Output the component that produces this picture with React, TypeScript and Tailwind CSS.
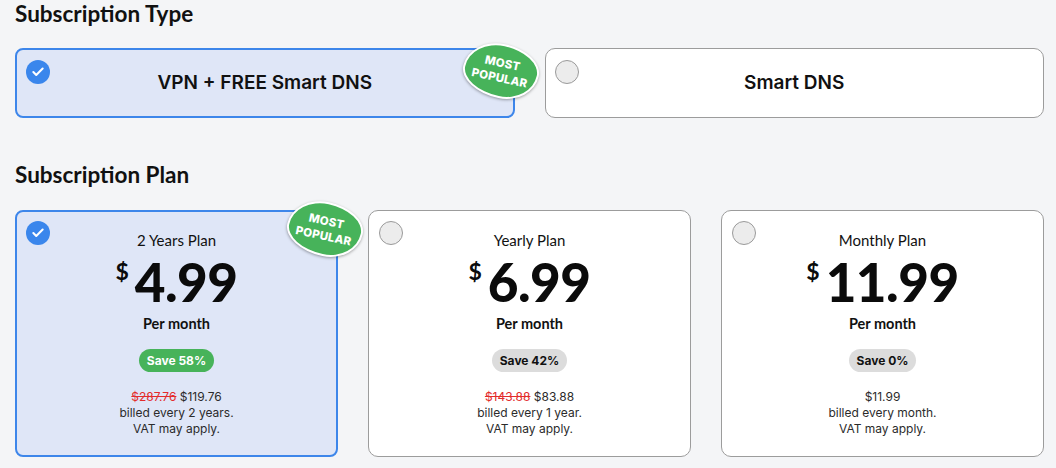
import { Check } from "lucide-react";

const SANS = "font-['Inter','Noto_Sans',sans-serif]";
const LATO = "font-['Lato','Noto_Sans',sans-serif]";

/* ---------- data ---------- */
const PLANS = [
  {
    name: "2 Years Plan",
    price: "4.99",
    save: "Save 58%",
    old: "$287.76",
    now: "$119.76",
    billed: "billed every 2 years.",
    selected: true,
  },
  {
    name: "Yearly Plan",
    price: "6.99",
    save: "Save 42%",
    old: "$143.88",
    now: "$83.88",
    billed: "billed every 1 year.",
    selected: false,
  },
  {
    name: "Monthly Plan",
    price: "11.99",
    save: "Save 0%",
    old: "",
    now: "$11.99",
    billed: "billed every month.",
    selected: false,
  },
];

/* ---------- bits ---------- */
function Radio({ on }: { on: boolean }) {
  return on ? (
    <span className="flex h-6 w-6 items-center justify-center rounded-full bg-[#3a86ec]">
      <Check size={14} strokeWidth={3.5} className="text-white" />
    </span>
  ) : (
    <span className="block h-6 w-6 rounded-full border border-[#9a9a9a] bg-[#ececec]" />
  );
}

function PopularBadge({ className }: { className: string }) {
  return (
    <div
      className={`absolute flex h-[54px] w-[76px] rotate-[12deg] items-center justify-center rounded-[48%_52%_46%_54%/55%_45%_55%_45%] border-2 border-white bg-[#47b35a] shadow-[0_1px_3px_rgba(0,0,0,0.35)] ${className}`}
    >
      <p
        className={`text-center text-[11.5px] font-extrabold uppercase leading-[15px] tracking-[0.2px] text-white ${SANS}`}
      >
        Most
        <br />
        Popular
      </p>
    </div>
  );
}

function TypeCard({ label, on }: { label: string; on: boolean }) {
  return (
    <div
      className={`relative flex h-[70px] items-center justify-center ${
        on
          ? "rounded-lg border-2 border-[#3d86ea] bg-[#dfe6f7]"
          : "rounded-[10px] border border-[#9c9c9c] bg-white"
      }`}
    >
      <div className={`absolute ${on ? "left-[9px] top-[10px]" : "left-[9px] top-[11px]"}`}>
        <Radio on={on} />
      </div>
      <span className={`text-[19px] font-semibold text-[#111] ${SANS}`}>{label}</span>
      {on ? <PopularBadge className="right-[-26px] top-[-6px]" /> : null}
    </div>
  );
}

function PlanCard({ p }: { p: (typeof PLANS)[number] }) {
  return (
    <div
      className={`relative flex h-[247px] flex-col items-center pt-[18px] ${
        p.selected
          ? "rounded-lg border-2 border-[#3d86ea] bg-[#dfe6f7]"
          : "rounded-[10px] border border-[#9c9c9c] bg-white pt-[19px]"
      }`}
    >
      <div className={`absolute ${p.selected ? "left-[9px] top-[9px]" : "left-[10px] top-[10px]"}`}>
        <Radio on={p.selected} />
      </div>
      <p className={`text-[15px] leading-5 text-[#111] ${LATO}`}>{p.name}</p>
      <div className={`mt-[5px] flex items-start text-[#0b0b0b] ${LATO}`}>
        <span className="mr-[6px] mt-[5px] text-[23px] font-bold leading-none">$</span>
        <span className="text-[53px] font-black leading-none tracking-[-0.5px]">{p.price}</span>
      </div>
      <p className={`mt-[6px] text-[14.5px] font-bold leading-5 text-[#111] ${LATO}`}>Per month</p>
      <span
        className={`mt-[15px] flex h-[23px] items-center rounded-full px-2 text-[12px] font-bold ${SANS} ${
          p.selected ? "bg-[#47b35a] text-white" : "bg-[#dcdcdc] text-[#111]"
        }`}
      >
        {p.save}
      </span>
      <div className={`mt-[17px] text-center text-[12px] leading-4 text-[#2b2b2b] ${SANS}`}>
        <p>
          {p.old ? (
            <>
              <span className="text-[#e32b2b] line-through">{p.old}</span>{" "}
            </>
          ) : null}
          {p.now}
        </p>
        <p>{p.billed}</p>
        <p>VAT may apply.</p>
      </div>
      {p.selected ? <PopularBadge className="right-[-27px] top-[-10px]" /> : null}
    </div>
  );
}

export default function App() {
  return (
    <div className="h-[468px] w-[1056px] overflow-hidden bg-[#f4f5f7] pl-[15px] pr-[12px]">
      <h2 className={`text-[22.5px] font-bold leading-7 text-[#111] ${LATO}`}>Subscription Type</h2>
      <div className="mt-5 grid grid-cols-2 gap-[30px]">
        <TypeCard label="VPN + FREE Smart DNS" on />
        <TypeCard label="Smart DNS" on={false} />
      </div>

      <h2 className={`mt-[43px] text-[22.5px] font-bold leading-7 text-[#111] ${LATO}`}>
        Subscription Plan
      </h2>
      <div className="mt-[21px] grid grid-cols-3 gap-[30px]">
        {PLANS.map((p) => (
          <PlanCard key={p.name} p={p} />
        ))}
      </div>
    </div>
  );
}
